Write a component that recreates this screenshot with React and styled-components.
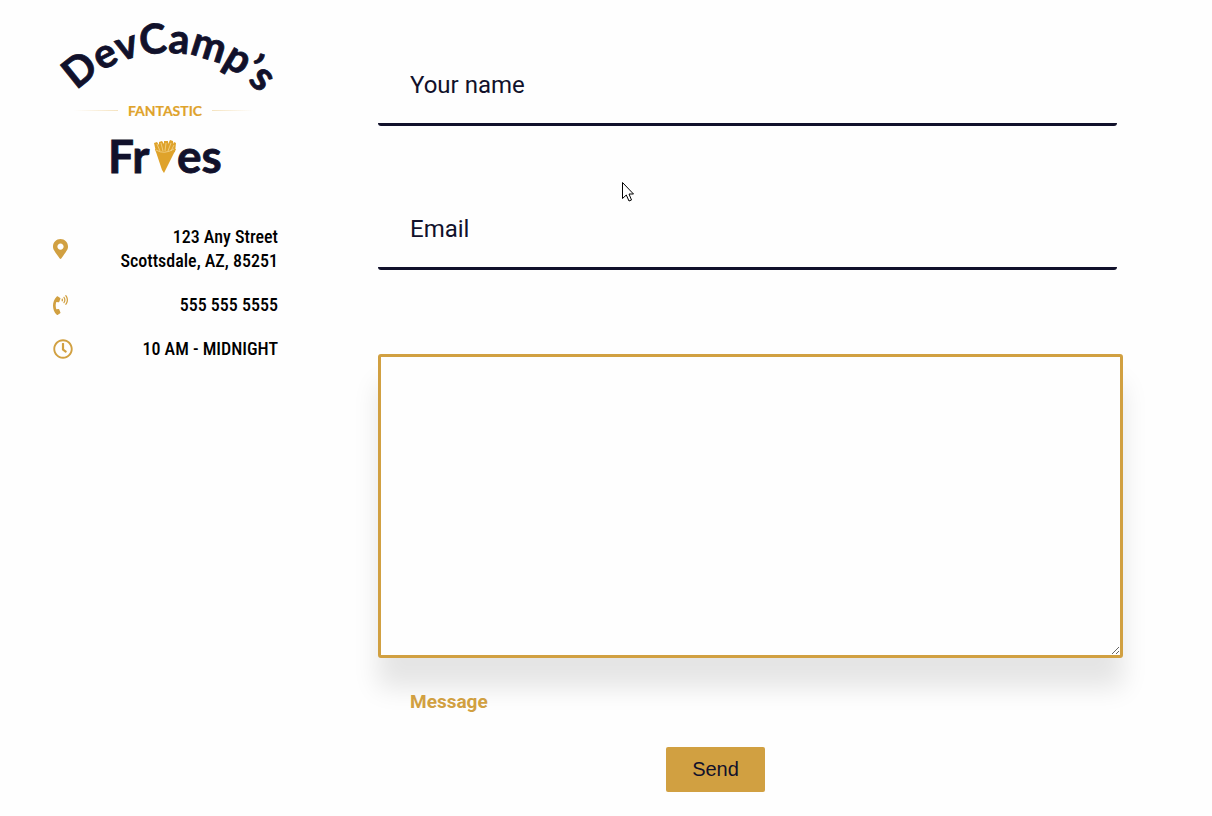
import React from "react";
import styled, { createGlobalStyle } from "styled-components";
import { FaMapMarkerAlt, FaPhoneVolume, FaRegClock } from "react-icons/fa";

const gold = "#d1a041";
const navy = "#11112b";
const logoGold = "#dfa32b";

const GlobalStyle = createGlobalStyle`
  *, *::before, *::after { box-sizing: border-box; }
  body { margin: 0; background: #fefefe; color: ${navy}; font-family: Roboto, sans-serif; }
`;

const Page = styled.div`
  position: relative;
  display: flex;
  align-items: flex-start;
  gap: 100px;
  padding: 0 89px 24px 53px;
`;

const Sidebar = styled.aside`
  flex: 0 0 225px;
  padding-top: 16px;
`;

const Logo = styled.svg`
  display: block;
  width: 100%;
  height: auto;
  overflow: visible;
  font-family: Lato, sans-serif;
  font-weight: 700;
`;

const ContactList = styled.ul`
  list-style: none;
  margin: 39px 0 0;
  padding: 0;
  display: grid;
  gap: 20px;
`;

const ContactItem = styled.li`
  display: flex;
  align-items: center;
  justify-content: space-between;
  color: #000;
  font: 500 18px/24px "Ubuntu Condensed", "Roboto Condensed", "Liberation Sans Narrow", sans-serif;
  text-align: right;
  svg { color: ${gold}; width: 20px; height: 20px; }
`;

const Form = styled.form`
  flex: 1;
  min-width: 0;
  display: flex;
  flex-direction: column;
`;

const TextInput = styled.input`
  margin: 46px 6px 18px 0;
  height: 80px;
  padding: 0 32px;
  border: 0;
  border-bottom: 3px solid ${navy};
  border-radius: 3px;
  background: transparent;
  color: ${navy};
  font: 400 24px/32px Roboto, sans-serif;
  outline: none;
  &::placeholder { color: ${navy}; opacity: 1; }
`;

const MessageBox = styled.textarea`
  margin-top: 66px;
  height: 304px;
  padding: 24px 32px;
  border: 3px solid ${gold};
  border-radius: 3px;
  background: #fefefe;
  font: 400 24px/32px Roboto, sans-serif;
  outline: none;
  resize: both;
  box-shadow: 0 30px 26px rgba(0, 0, 0, 0.1);
`;

const MessageLabel = styled.label`
  position: relative;
  padding: 32px 32px 0;
  color: ${gold};
  font: 700 19px/24px Roboto, sans-serif;
`;

const Actions = styled.div`
  display: flex;
  justify-content: center;
  padding: 33px 70px 0 0;
`;

const SendButton = styled.button`
  width: 99px;
  height: 45px;
  padding: 0 0 2px;
  border: 0;
  border-radius: 2px;
  background: ${gold};
  color: ${navy};
  font: 400 20px/24px "Liberation Sans", Arial, sans-serif;
`;

const Pointer = styled.svg`
  position: absolute;
  left: 621px;
  top: 181px;
  pointer-events: none;
`;

function BrandLogo() {
  return (
    <Logo viewBox="53 16 225 170" role="img" aria-label="DevCamp's Fantastic Fries">
      <defs>
        <path id="arch" d="M77 91 A126 126 0 0 1 264 98" />
        <linearGradient id="fadeLeft">
          <stop offset="0" stopColor={logoGold} stopOpacity="0" />
          <stop offset="1" stopColor={logoGold} stopOpacity="0.3" />
        </linearGradient>
        <linearGradient id="fadeRight">
          <stop offset="0" stopColor={logoGold} stopOpacity="0.3" />
          <stop offset="1" stopColor={logoGold} stopOpacity="0" />
        </linearGradient>
      </defs>
      <text fill={navy} stroke={navy} strokeWidth="0.8" fontSize="41"><textPath href="#arch">DevCamp’s</textPath></text>
      <rect x="74" y="110" width="44" height="1" fill="url(#fadeLeft)" />
      <text x="165" y="116" textAnchor="middle" fill={logoGold} stroke={logoGold} strokeWidth="0.2" fontSize="14">FANTASTIC</text>
      <rect x="212" y="110" width="42" height="1" fill="url(#fadeRight)" />
      <text x="108" y="173" fill={navy} stroke={navy} strokeWidth="0.8" fontSize="46">Fr</text>
      <text x="177" y="173" fill={navy} stroke={navy} strokeWidth="0.8" fontSize="46">es</text>
      <path d="M155 149 L176 149 L164 173 L162 170Z" fill={logoGold} />
      <path d="M154 143l3-1 2 3 0-3 3-1 2 3 0-3 4 0 0 3 2-4 3 1 0 3 1-2 2 1-1 9-10 3-9-3z" fill={logoGold} />
      <path d="M157 144l3 7M161 143l2 8M166 143l-1 8M171 143l-3 8M174 145l-3 6M156 150q8 5 18-1" fill="none" stroke="#f6dc9f" strokeWidth="0.7" />
    </Logo>
  );
}

export default function App() {
  return (
    <Page>
      <GlobalStyle />
      <Sidebar>
        <BrandLogo />
        <ContactList>
          <ContactItem><FaMapMarkerAlt preserveAspectRatio="xMinYMid meet" /><span>123 Any Street<br />Scottsdale, AZ, 85251</span></ContactItem>
          <ContactItem><FaPhoneVolume preserveAspectRatio="xMinYMid meet" /><span>555 555 5555</span></ContactItem>
          <ContactItem><FaRegClock /><span>10 AM - MIDNIGHT</span></ContactItem>
        </ContactList>
      </Sidebar>
      <Form onSubmit={(e) => e.preventDefault()}>
        <TextInput type="text" name="name" placeholder="Your name" aria-label="Your name" />
        <TextInput type="email" name="email" placeholder="Email" aria-label="Email" />
        <MessageBox id="message" name="message" />
        <MessageLabel htmlFor="message">Message</MessageLabel>
        <Actions><SendButton type="submit">Send</SendButton></Actions>
      </Form>
      <Pointer width="14" height="22" viewBox="0 0 14 22" aria-hidden="true">
        <path d="M1.5 1.5V17.5L5.3 14L8 20L10.5 19L8 13H12.5Z" fill="#fff" stroke="#000" strokeWidth="1" />
      </Pointer>
    </Page>
  );
}
